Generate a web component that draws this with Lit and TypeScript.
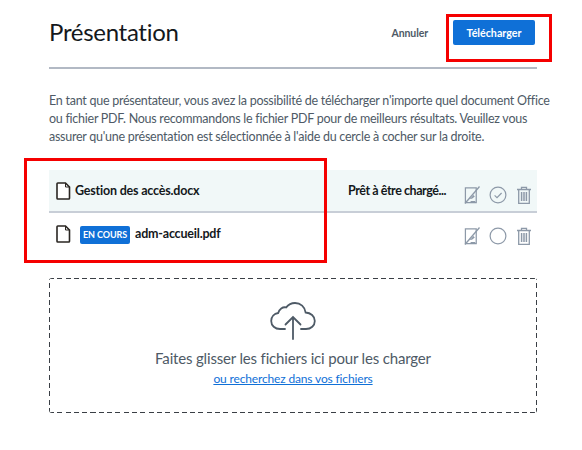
import { LitElement, html, css, svg } from "lit";
import { customElement } from "lit/decorators.js";

const fileIcon = html`<svg class="file" width="15" height="18" viewBox="0 0 15 18" fill="none">
  <path d="M1.800 1h7.700l4 4v11.200a.8.8 0 0 1-.8.8H1.800a.8.8 0 0 1-.8-.8V1.800a.8.8 0 0 1 .8-.8z" stroke="#2a2622" stroke-width="1.600" fill="#fff" />
  <path d="M9.500 1v4h4" stroke="#2a2622" stroke-width="1" />
</svg>`;

const noteIcon = svg`<svg width="16" height="20" viewBox="0 0 17 20" fill="none" stroke="#8d99a8" stroke-width="1.300">
  <path d="M1.500 2.500h11.500v15.500H1.500z" />
  <path d="M1 19L16.500 1" stroke-width="1.400" />
  <path d="M5 14l2.500-1 2.500-3 1.500 1.500-3 2.600z" fill="#8d99a8" stroke="none" />
  <path d="M7 17h5" />
</svg>`;

const trashIcon = svg`<svg width="16" height="18" viewBox="0 0 16 18" fill="none" stroke="#8d99a8" stroke-width="1.300">
  <path d="M1 3.500h14M5.500 3.500V1.300h5v2.200" />
  <path d="M2.700 3.500v13.800h10.600V3.500" />
  <path d="M5.600 6v9M8 6v9M10.400 6v9" stroke-width="1.500" />
</svg>`;

const circleIcon = (checked: boolean) => svg`<svg width="18" height="18" viewBox="0 0 18 18" fill="none" stroke="#8d99a8" stroke-width="1.200">
  <circle cx="9" cy="9" r="7.900" />
  ${checked ? svg`<path d="M5.600 9.400l2.400 2.200 4.600-4.600" />` : ""}
</svg>`;

@customElement("app-root")
export class AppRoot extends LitElement {
  static styles = css`
    :host {
      display: block;
      position: relative;
      height: 450px;
      overflow: hidden;
      background: #fff;
      font-family: Lato, "Noto Sans", sans-serif;
      font-variant-ligatures: none;
      color: #22262b;
    }

    .page {
      padding: 0 45px 0 49px;
    }

    .header {
      display: flex;
      align-items: center;
      height: 67px;
      border-bottom: 2px solid #b2b9c4;
    }

    h1 {
      margin: 0 auto 4px 0;
      font-size: 24px;
      font-weight: 400;
      letter-spacing: -0.3px;
      color: #14181c;
    }

    .cancel {
      margin-right: 25px;
      margin-bottom: 2px;
      font-size: 10.500px;
      font-weight: 700;
      letter-spacing: -0.1px;
      color: #4e5a66;
    }

    .upload {
      display: flex;
      align-items: center;
      justify-content: center;
      width: 82px;
      height: 25px;
      margin: 0 2px 2px 0;
      border-radius: 2px;
      background: #0f70d7;
      color: #fff;
      font-size: 10.700px;
      font-weight: 700;
    }

    p {
      margin: 23px 0 24px;
      font-size: 12.500px;
      line-height: 18px;
      letter-spacing: -0.255px;
      color: #4e5a66;
      white-space: nowrap;
    }

    .row {
      display: flex;
      align-items: center;
      height: 41px;
      padding: 0 5px 0 7px;
    }

    .row.ready {
      background: #f1f8f8;
      border-bottom: 2px solid #c8ced7;
    }

    .name {
      margin-left: 4px;
      font-size: 12.500px;
      font-weight: 700;
      letter-spacing: -0.2px;
      color: #14181c;
    }

    .badge {
      margin: 2px 5px 0 9px;
      padding: 0 3px;
      height: 18px;
      line-height: 18px;
      border-radius: 2px;
      background: #0f70d7;
      color: #fff;
      font-size: 9px;
      font-weight: 700;
      letter-spacing: -0.1px;
    }

    .badge + .name {
      margin-left: 0;
    }

    .status {
      margin-left: auto;
      margin-right: 18px;
      font-size: 12.500px;
      font-weight: 700;
      letter-spacing: -0.45px;
      color: #14181c;
    }

    .actions {
      display: flex;
      align-items: center;
      gap: 9px;
      margin-left: auto;
      margin-top: 5px;
    }

    .ready .actions {
      margin-top: 9px;
    }

    .status + .actions {
      margin-left: 0;
    }

    .drop {
      display: flex;
      flex-direction: column;
      align-items: center;
      box-sizing: border-box;
      height: 135px;
      margin-top: 24px;
      padding-top: 24px;
      border-radius: 3px;
      background:
        repeating-linear-gradient(90deg, #3a3f45 0 5px, transparent 5px 8.300px) top / 100% 1px no-repeat,
        repeating-linear-gradient(90deg, #3a3f45 0 5px, transparent 5px 8.300px) bottom / 100% 1px no-repeat,
        repeating-linear-gradient(0deg, #3a3f45 0 5px, transparent 5px 8.300px) left / 1px 100% no-repeat,
        repeating-linear-gradient(0deg, #3a3f45 0 5px, transparent 5px 8.300px) right / 1px 100% no-repeat;
    }

    .drop-title {
      margin-top: 9px;
      font-size: 15px;
      letter-spacing: -0.17px;
      color: #4e5a66;
    }

    .drop-link {
      margin-top: 4px;
      font-size: 12px;
      letter-spacing: -0.15px;
      color: #0f70d7;
      text-decoration: underline;
    }

    .mark {
      position: absolute;
      box-sizing: border-box;
      border: 3px solid #f50000;
    }

    .mark-upload {
      left: 446px;
      top: 14px;
      width: 106px;
      height: 48px;
    }

    .mark-files {
      left: 24px;
      top: 158px;
      width: 303px;
      height: 105px;
    }
  `;

  render() {
    return html`<div class="page">
        <div class="header">
          <h1>Présentation</h1>
          <span class="cancel">Annuler</span>
          <span class="upload">Télécharger</span>
        </div>
        <p>
          En tant que présentateur, vous avez la possibilité de télécharger n'importe quel document Office<br />
          ou fichier PDF. Nous recommandons le fichier PDF pour de meilleurs résultats. Veuillez vous<br />
          assurer qu'une présentation est sélectionnée à l'aide du cercle à cocher sur la droite.
        </p>
        <div class="row ready">
          ${fileIcon}
          <span class="name">Gestion des accès.docx</span>
          <span class="status">Prêt à être chargé...</span>
          <div class="actions">${noteIcon}${circleIcon(true)}${trashIcon}</div>
        </div>
        <div class="row">
          ${fileIcon}
          <span class="badge">EN COURS</span>
          <span class="name">adm-accueil.pdf</span>
          <div class="actions">${noteIcon}${circleIcon(false)}${trashIcon}</div>
        </div>
        <div class="drop">
          <svg width="46" height="38" viewBox="0 0 46 38" fill="none" stroke="#4e5a66" stroke-width="1.800">
            <path d="M15 27H10C5 27 1.200 23.600 1.200 19c0-4.200 3-7.400 7-8 1-4 4.400-6.400 8-5.600C18.400 2.500 21.500 1 25 1c5.500 0 10 4 10.600 9.500 5 .3 9.200 3.600 9.200 8.500 0 4.600-3.800 8-8.800 8h-5" stroke-linecap="round" />
            <path d="M23 37V15M15.500 22.500L23 15l7.500 7.500" stroke-linecap="round" />
          </svg>
          <span class="drop-title">Faites glisser les fichiers ici pour les charger</span>
          <a class="drop-link">ou recherchez dans vos fichiers</a>
        </div>
      </div>
      <div class="mark mark-upload"></div>
      <div class="mark mark-files"></div>`;
  }
}
